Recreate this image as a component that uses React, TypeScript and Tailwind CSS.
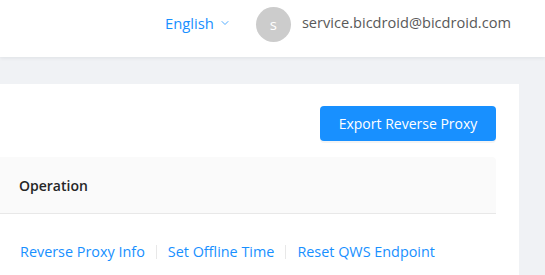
import { ChevronDown } from "lucide-react";

const ACTIONS = ["Reverse Proxy Info", "Set Offline Time", "Reset QWS Endpoint"];

export default function App() {
  return (
    <div
      className="w-[545px] h-[275px] overflow-hidden bg-[#f0f2f5] flex flex-col"
      style={{ fontFamily: '"Open Sans", "Noto Sans", sans-serif' }}
    >
      {/* top bar */}
      <header className="h-[57px] shrink-0 bg-white shadow-[0_1px_4px_rgba(0,21,41,0.08)] flex items-center justify-end pr-[34px] pb-[11px] text-[14px]">
        <div className="flex items-center gap-[5px] text-[#1890ff] mr-[25px]">
          <span className="text-[14.8px]">English</span>
          <ChevronDown className="w-[12px] h-[12px]" strokeWidth={1.5} />
        </div>
        <div className="flex items-center gap-[11px]">
          <div className="w-[35px] h-[35px] rounded-full bg-[#cccccc] text-white flex items-center justify-center text-[15px] mt-[3px]">
            s
          </div>
          <span className="text-[#595959] text-[14.6px]">service.bicdroid@bicdroid.com</span>
        </div>
      </header>

      {/* content */}
      <div className="flex-1 pt-[27px] pr-[26px]">
        <div className="bg-white h-full pt-[22px] pr-[23px]">
          <div className="flex justify-end">
            <button className="w-[176px] h-[35px] rounded-[4px] bg-[#1890ff] text-white text-[14px] shadow-[0_2px_0_rgba(0,0,0,0.045)]">
              Export Reverse Proxy
            </button>
          </div>

          <div className="mt-[16px]">
            <div className="h-[57px] bg-[#fafafa] border-b border-[#e8e8e8] rounded-tr-[4px] flex items-center pl-[19px] text-[14px] font-semibold text-[#262626]">
              Operation
            </div>
            <div className="h-[76px] flex items-center pl-[20px] text-[14.4px] text-[#1890ff]">
              {ACTIONS.map((a, i) => (
                <div key={a} className="flex items-center">
                  {i > 0 && <span className="w-px h-[14px] bg-[#e8e8e8] mx-[11px]" />}
                  <span>{a}</span>
                </div>
              ))}
            </div>
          </div>
        </div>
      </div>
    </div>
  );
}
